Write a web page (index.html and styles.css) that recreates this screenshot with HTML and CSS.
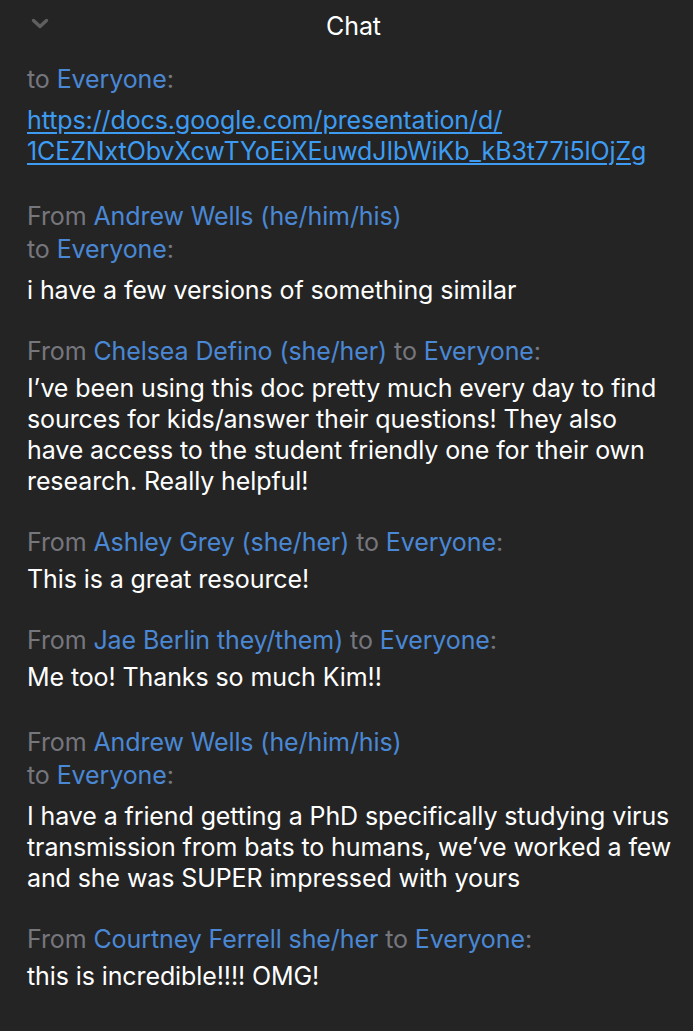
FILE: index.html
```html
<!DOCTYPE html>
<html lang="en">
<head>
<meta charset="utf-8">
<title>Chat</title>
<link rel="stylesheet" href="styles.css">
</head>
<body>
<div class="panel">
  <header class="header">
    <svg class="chevron" width="18" height="12" viewBox="0 0 18 12"><path d="M2.5 2.5 L9 8.5 L15.5 2.5" fill="none" stroke="#5f5f5f" stroke-width="3.4" stroke-linecap="round" stroke-linejoin="round"/></svg>
    <h1 class="title">Chat</h1>
  </header>
  <main class="messages">
    <section class="msg">
      <div class="meta wrap"><span class="dim">to</span> <span class="name">Everyone</span><span class="dim">:</span></div>
      <div class="body"><a class="link" href="#">https://docs.google.com/presentation/d/<br>1CEZNxtObvXcwTYoEiXEuwdJIbWiKb_kB3t77i5lOjZg</a></div>
    </section>
    <section class="msg">
      <div class="meta wrap"><span class="dim">From</span> <span class="name">Andrew Wells (he/him/his)</span><br><span class="dim">to</span> <span class="name">Everyone</span><span class="dim">:</span></div>
      <div class="body">i have a few versions of something similar</div>
    </section>
    <section class="msg">
      <div class="meta"><span class="dim">From</span> <span class="name">Chelsea Defino (she/her)</span> <span class="dim">to</span> <span class="name">Everyone</span><span class="dim">:</span></div>
      <div class="body">I’ve been using this doc pretty much every day to find sources for kids/answer their questions! They also have access to the student friendly one for their own research. Really helpful!</div>
    </section>
    <section class="msg">
      <div class="meta"><span class="dim">From</span> <span class="name">Ashley Grey (she/her)</span> <span class="dim">to</span> <span class="name">Everyone</span><span class="dim">:</span></div>
      <div class="body">This is a great resource!</div>
    </section>
    <section class="msg">
      <div class="meta"><span class="dim">From</span> <span class="name">Jae Berlin they/them)</span> <span class="dim">to</span> <span class="name">Everyone</span><span class="dim">:</span></div>
      <div class="body">Me too! Thanks so much Kim!!</div>
    </section>
    <section class="msg">
      <div class="meta wrap"><span class="dim">From</span> <span class="name">Andrew Wells (he/him/his)</span><br><span class="dim">to</span> <span class="name">Everyone</span><span class="dim">:</span></div>
      <div class="body">I have a friend getting a PhD specifically studying virus transmission from bats to humans, we’ve worked a few and she was SUPER impressed with yours</div>
    </section>
    <section class="msg">
      <div class="meta"><span class="dim">From</span> <span class="name">Courtney Ferrell she/her</span> <span class="dim">to</span> <span class="name">Everyone</span><span class="dim">:</span></div>
      <div class="body">this is incredible!!!! OMG!</div>
    </section>
  </main>
</div>
</body>
</html>
```

FILE: styles.css
```css
html, body {
  margin: 0;
  padding: 0;
  background: #242424;
}
body {
  font-family: Inter, "Noto Sans", "Liberation Sans", sans-serif;
  color: #ffffff;
  width: 693px;
  height: 1031px;
  overflow: hidden;
}
.panel {
  display: flex;
  flex-direction: column;
}
.header {
  position: relative;
  height: 52px;
  display: flex;
  align-items: center;
  justify-content: center;
}
.chevron {
  position: absolute;
  left: 31px;
  top: 18px;
}
.title {
  margin: 0;
  font-size: 25px;
  font-weight: 400;
  color: #ffffff;
  padding-left: 14px;
  letter-spacing: -0.1px;
}
.messages {
  display: flex;
  flex-direction: column;
  gap: 29px;
  padding: 11px 19px 0 27px;
}
.msg {
  display: flex;
  flex-direction: column;
  gap: 5px;
}
.meta {
  font-size: 25px;
  line-height: 33px;
  letter-spacing: -0.1px;
}
.meta.wrap {
  margin-top: 4px;
  margin-bottom: 4px;
}
.msg:first-child .meta.wrap {
  margin-top: 0;
}
.dim { color: #76767d; }
.name { color: #4a88d5; }
.body {
  font-size: 25px;
  line-height: 31px;
  letter-spacing: -0.1px;
  color: #ffffff;
}
.link {
  color: #3d9cf2;
  text-decoration: underline;
  text-underline-offset: 3px;
}
```
